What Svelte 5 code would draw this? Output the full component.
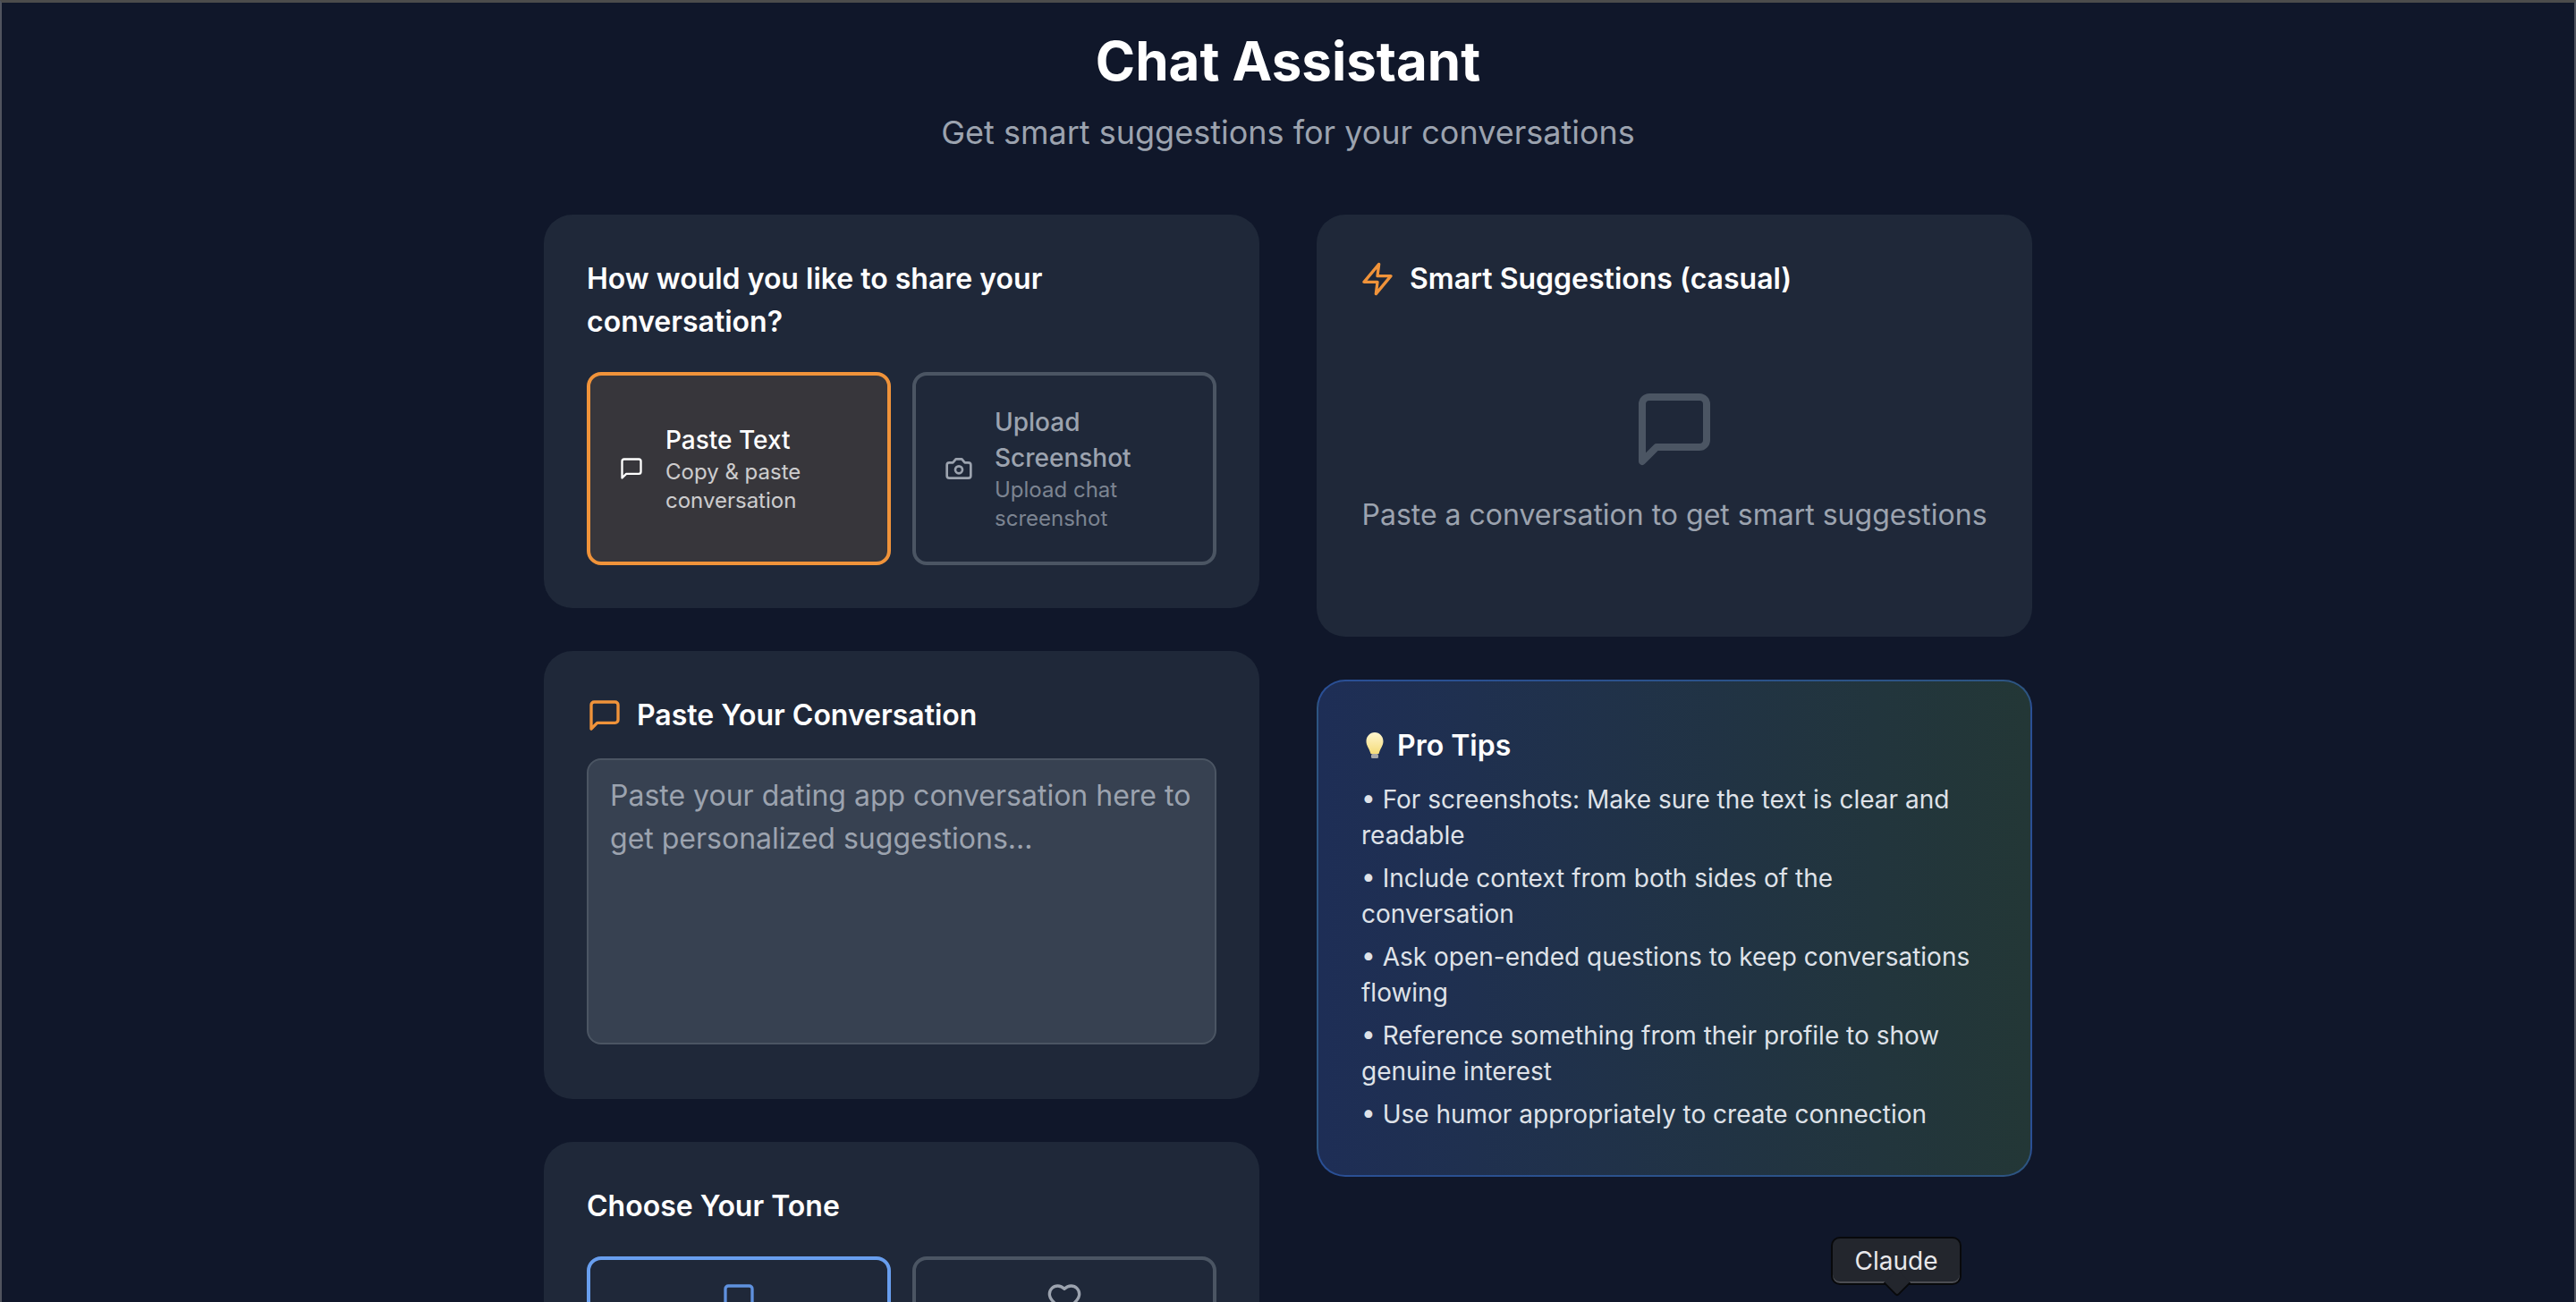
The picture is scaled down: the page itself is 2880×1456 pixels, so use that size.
<script>
  const tips = [
    'For screenshots: Make sure the text is clear and readable',
    'Include context from both sides of the conversation',
    'Ask open-ended questions to keep conversations flowing',
    'Reference something from their profile to show genuine interest',
    'Use humor appropriately to create connection'
  ]

  const chat = 'M21 15a2 2 0 0 1-2 2H7l-4 4V5a2 2 0 0 1 2-2h14a2 2 0 0 1 2 2z'
</script>

<div class="window">
  <header>
    <h1>Chat Assistant</h1>
    <p>Get smart suggestions for your conversations</p>
  </header>

  <main>
    <div class="column">
      <section class="card">
        <h2 class="spaced">How would you like to share your conversation?</h2>
        <div class="options">
          <button class="option active">
            <svg class="icon" viewBox="0 0 24 24" aria-hidden="true"><path d={chat} /></svg>
            <span class="labels">
              <span class="name">Paste Text</span>
              <span class="hint">Copy &amp; paste conversation</span>
            </span>
          </button>
          <button class="option">
            <svg class="icon" viewBox="0 0 24 24" aria-hidden="true">
              <path d="M14.5 4h-5L7 7H4a2 2 0 0 0-2 2v9a2 2 0 0 0 2 2h16a2 2 0 0 0 2-2V9a2 2 0 0 0-2-2h-3l-2.5-3z" />
              <circle cx="12" cy="13" r="3" />
            </svg>
            <span class="labels">
              <span class="name">Upload Screenshot</span>
              <span class="hint">Upload chat screenshot</span>
            </span>
          </button>
        </div>
      </section>

      <section class="card">
        <h2 class="with-icon">
          <svg class="orange" viewBox="0 0 24 24" aria-hidden="true"><path d={chat} /></svg>
          Paste Your Conversation
        </h2>
        <textarea placeholder="Paste your dating app conversation here to get personalized suggestions..."></textarea>
      </section>

      <section class="card">
        <h2 class="spaced">Choose Your Tone</h2>
        <div class="options">
          <button class="tone selected">
            <svg viewBox="0 0 24 24" aria-hidden="true"><path d={chat} /></svg>
          </button>
          <button class="tone">
            <svg viewBox="0 0 24 24" aria-hidden="true"><path d="M19 14c1.490-1.460 3-3.210 3-5.500A5.500 5.500 0 0 0 16.500 3c-1.760 0-3 .5-4.500 2-1.500-1.500-2.740-2-4.500-2A5.500 5.500 0 0 0 2 8.500c0 2.300 1.500 4.050 3 5.500l7 7Z" /></svg>
          </button>
        </div>
      </section>
    </div>

    <div class="column">
      <section class="card">
        <h2 class="with-icon wide">
          <svg class="orange" viewBox="0 0 24 24" aria-hidden="true"><path d="M13 2 3 14h9l-1 8 10-12h-9l1-8z" /></svg>
          Smart Suggestions (casual)
        </h2>
        <div class="empty">
          <svg viewBox="0 0 24 24" aria-hidden="true"><path d={chat} /></svg>
          <p>Paste a conversation to get smart suggestions</p>
        </div>
      </section>

      <section class="card tips">
        <h2 class="with-icon bulb">
          <svg viewBox="0 0 32 32" aria-hidden="true">
            <defs>
              <linearGradient id="glass" x1="0" y1="0" x2="0" y2="1">
                <stop offset="0" stop-color="#fff6cf" />
                <stop offset="1" stop-color="#f5dc7a" />
              </linearGradient>
            </defs>
            <path d="M15 1C9.500 1 5.500 5.500 5.500 11c0 5 3.500 8 5 14h9c1.500-6 5-9 5-14C24.500 5.500 20.500 1 15 1z" fill="url(#glass)" />
            <rect class="base" x="11" y="25" width="8" height="5" rx="1.500" />
          </svg>
          Pro Tips
        </h2>
        <ul>
          {#each tips as tip}
            <li>• {tip}</li>
          {/each}
        </ul>
      </section>
    </div>
  </main>

  <div class="tooltip">Claude</div>
</div>

<style>
  :global(body) {
    background: #10172a;
  }

  .window {
    box-sizing: border-box;
    height: 100vh;
    overflow: hidden;
    position: relative;
    border: solid #50545e;
    border-width: 3px 2px 0;
    border-top-color: #4c4c4c;
    background: #10172a;
    font-family: Inter, "Noto Sans", sans-serif;
    color: #fff;
  }

  header {
    padding-top: 29px;
    text-align: center;
  }

  h1 {
    margin: 0;
    font-size: 60px;
    line-height: 72px;
    font-weight: 700;
  }

  header p {
    margin: 16px 0 0;
    font-size: 36px;
    line-height: 56px;
    color: #9ca3af;
  }

  main {
    display: grid;
    grid-template-columns: 800px 800px;
    gap: 64px;
    justify-content: center;
    margin-top: 64px;
  }

  .column {
    display: flex;
    flex-direction: column;
    gap: 48px;
    align-items: stretch;
  }

  .card {
    box-sizing: border-box;
    padding: 48px;
    border-radius: 32px;
    background: #1f2839;
  }

  h2 {
    margin: 0;
    font-size: 32px;
    line-height: 48px;
    font-weight: 600;
  }

  .spaced {
    margin-bottom: 32px;
  }

  .with-icon {
    display: flex;
    align-items: center;
    gap: 16px;
    margin-bottom: 24px;
  }

  .with-icon.wide {
    margin-bottom: 32px;
  }

  .with-icon svg {
    width: 40px;
    height: 40px;
    fill: none;
    stroke-width: 2;
    stroke-linecap: round;
    stroke-linejoin: round;
  }

  .orange {
    stroke: #f0933a;
  }

  .options {
    display: grid;
    grid-template-columns: 1fr 1fr;
    gap: 24px;
  }

  button {
    box-sizing: border-box;
    border: 4px solid #4b5563;
    border-radius: 16px;
    background: transparent;
    font: inherit;
    color: #9ca3af;
    text-align: left;
  }

  .option {
    display: flex;
    align-items: center;
    gap: 24px;
    padding: 32px;
    min-height: 216px;
  }

  .option.active {
    border-color: #f0933a;
    background: #37363b;
    color: #fff;
  }

  .icon {
    flex: none;
    width: 32px;
    height: 32px;
    fill: none;
    stroke: currentColor;
    stroke-width: 2;
    stroke-linecap: round;
    stroke-linejoin: round;
  }

  .active .icon {
    width: 28px;
  }

  .labels {
    display: flex;
    flex-direction: column;
  }

  .name {
    font-size: 28px;
    line-height: 40px;
    font-weight: 500;
  }

  .hint {
    font-size: 24px;
    line-height: 32px;
    opacity: 0.75;
  }

  textarea {
    display: block;
    box-sizing: border-box;
    width: 100%;
    height: 320px;
    margin-bottom: 13px;
    padding: 16px 24px;
    border: 2px solid #4b5563;
    border-radius: 16px;
    background: #374151;
    font: inherit;
    font-size: 32px;
    line-height: 48px;
    color: #fff;
    resize: none;
  }

  textarea::placeholder {
    color: #9ca3af;
  }

  .tone {
    display: flex;
    flex-direction: column;
    align-items: center;
    justify-content: flex-start;
    padding: 24px;
    height: 216px;
  }

  .tone svg {
    width: 40px;
    height: 40px;
    fill: none;
    stroke: currentColor;
    stroke-width: 2;
    stroke-linecap: round;
    stroke-linejoin: round;
  }

  .tone.selected {
    border-color: #689eee;
    color: #5f91de;
  }

  .empty {
    padding: 64px 0;
    text-align: center;
  }

  .empty svg {
    display: block;
    width: 96px;
    height: 96px;
    margin: 0 auto 24px;
    fill: none;
    stroke: #4b5563;
    stroke-width: 2;
    stroke-linecap: round;
    stroke-linejoin: round;
  }

  .empty p {
    margin: 0;
    font-size: 32px;
    line-height: 48px;
    color: #9ca3af;
  }

  .tips {
    border: 2px solid rgba(59, 130, 246, 0.4);
    background: linear-gradient(to right, #1e2e56, #233736);
  }

  .bulb {
    gap: 8px;
    margin-bottom: 16px;
  }

  .bulb svg {
    stroke: none;
    width: 32px;
    height: 32px;
  }

  .base {
    fill: #a8a8a8;
  }

  ul {
    display: flex;
    flex-direction: column;
    gap: 8px;
    margin: 0;
    padding: 0;
    list-style: none;
    font-size: 28px;
    line-height: 40px;
    color: #dfe2e8;
  }

  .tooltip {
    position: absolute;
    left: 2045px;
    top: 1380px;
    box-sizing: border-box;
    width: 146px;
    height: 54px;
    border: 2px solid #08090b;
    border-radius: 10px;
    background: #23262d;
    box-shadow: inset 0 -2px 0 #4a4c52;
    font-size: 28px;
    line-height: 50px;
    text-align: center;
    color: #e8e8ea;
  }

  .tooltip::after {
    content: '';
    position: absolute;
    left: 61px;
    bottom: -11px;
    width: 20px;
    height: 20px;
    background: #23262d;
    border: solid #08090b;
    border-width: 0 2px 2px 0;
    border-bottom-right-radius: 4px;
    transform: rotate(45deg);
  }
</style>
